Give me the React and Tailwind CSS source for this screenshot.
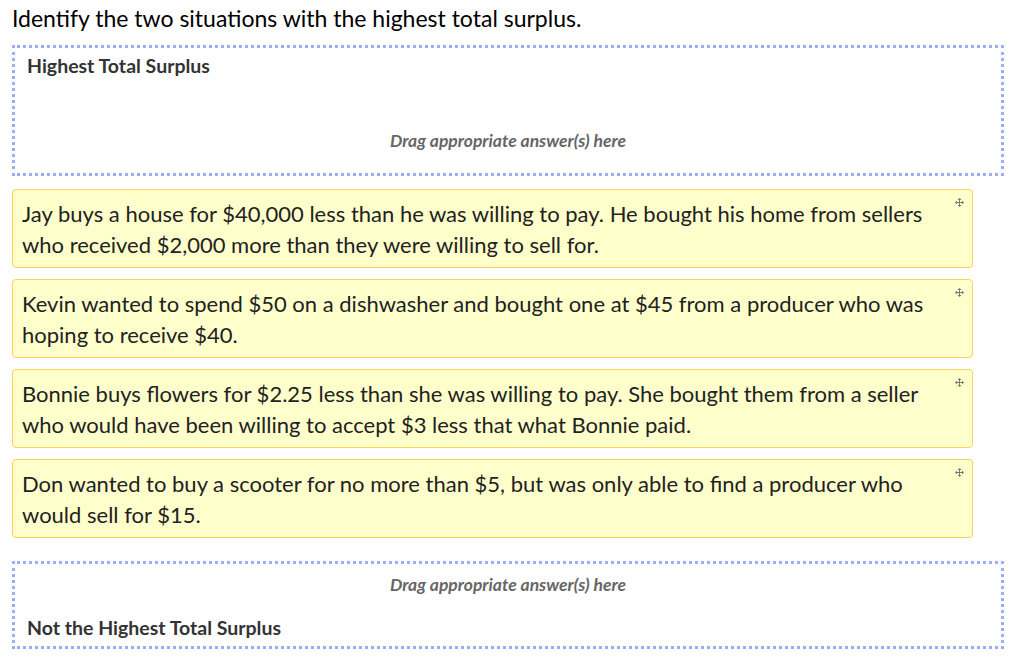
import React from 'react';

const ITEMS = [
  'Jay buys a house for $40,000 less than he was willing to pay. He bought his home from sellers who received $2,000 more than they were willing to sell for.',
  'Kevin wanted to spend $50 on a dishwasher and bought one at $45 from a producer who was hoping to receive $40.',
  'Bonnie buys flowers for $2.25 less than she was willing to pay. She bought them from a seller who would have been willing to accept $3 less that what Bonnie paid.',
  'Don wanted to buy a scooter for no more than $5, but was only able to find a producer who would sell for $15.',
];

function MoveIcon() {
  return (
    <svg width="9" height="9" viewBox="0 0 9 9" className="text-[#777]" fill="currentColor">
      <rect x="4" y="1" width="1" height="7" />
      <rect x="1" y="4" width="7" height="1" />
      <path d="M4.5 0 L6.5 2 L2.5 2 Z" />
      <path d="M4.5 9 L6.5 7 L2.5 7 Z" />
      <path d="M0 4.5 L2 2.5 L2 6.5 Z" />
      <path d="M9 4.5 L7 2.5 L7 6.5 Z" />
    </svg>
  );
}

function DropZone({ label, top }) {
  return (
    <div className="ml-3 mr-5 border-[3px] border-dotted border-[#9badff] px-3">
      {top ? (
        <>
          <div className="pt-[6px] text-[19.5px] font-bold text-[#333] leading-[24px]">{label}</div>
          <div className="pt-[52px] pb-[21px] text-center text-[17.5px] font-bold italic text-[#666] leading-[22px]">
            Drag appropriate answer(s) here
          </div>
        </>
      ) : (
        <>
          <div className="pt-[10px] text-center text-[17.5px] font-bold italic text-[#666] leading-[22px]">
            Drag appropriate answer(s) here
          </div>
          <div className="pt-[20px] pb-[6px] text-[19.5px] font-bold text-[#333] leading-[24px]">{label}</div>
        </>
      )}
    </div>
  );
}

export default function App() {
  return (
    <div className="bg-white w-[1024px] h-[665px] overflow-hidden font-['Lato',sans-serif]">
      <div className="pl-3 pt-[3px] text-[23px] leading-[30px] text-black">
        Identify the two situations with the highest total surplus.
      </div>
      <div className="mt-[12px]">
        <DropZone label="Highest Total Surplus" top />
      </div>
      <div className="mt-[13px] ml-3 w-[961px] flex flex-col gap-[11px]">
        {ITEMS.map((t) => (
          <div
            key={t}
            className="relative bg-[#ffffcc] border border-[#fbd35a] rounded-[4px] pl-[9px] pr-[24px] pt-[8px] pb-[7px] text-[22px] leading-[31px] text-[#222]"
          >
            <span className="absolute right-[8px] top-[8px]">
              <MoveIcon />
            </span>
            {t}
          </div>
        ))}
      </div>
      <div className="mt-[23px]">
        <DropZone label="Not the Highest Total Surplus" />
      </div>
    </div>
  );
}
